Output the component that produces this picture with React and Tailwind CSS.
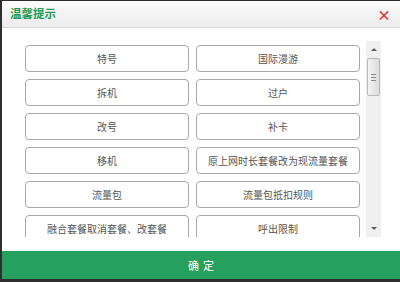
import React from "react";

const items = [
  "特号",
  "国际漫游",
  "拆机",
  "过户",
  "改号",
  "补卡",
  "移机",
  "原上网时长套餐改为现流量套餐",
  "流量包",
  "流量包抵扣规则",
  "融合套餐取消套餐、改套餐",
  "呼出限制",
];

function ScrollBar() {
  return (
    <div className="w-[15px] h-full bg-[#f0f0f0] flex flex-col items-center">
      <div className="h-[17px] w-full flex items-center justify-center">
        <div className="w-0 h-0 border-l-[3px] border-r-[3px] border-b-[3px] border-l-transparent border-r-transparent border-b-[#606060]" />
      </div>
      <div className="w-[13px] h-[38px] border border-[#b8b8b8] rounded-[2px] bg-gradient-to-r from-[#f4f4f4] to-[#dcdcdc] flex flex-col items-center justify-center gap-[2px]">
        <div className="w-[5px] h-px bg-[#8a8a8a]" />
        <div className="w-[5px] h-px bg-[#8a8a8a]" />
        <div className="w-[5px] h-px bg-[#8a8a8a]" />
      </div>
      <div className="flex-1" />
      <div className="h-[17px] w-full flex items-center justify-center">
        <div className="w-0 h-0 border-l-[3px] border-r-[3px] border-t-[3px] border-l-transparent border-r-transparent border-t-[#606060]" />
      </div>
    </div>
  );
}

export default function App() {
  return (
    <div
      className="w-[400px] h-[282px] bg-[#2e2e2e] pl-[2px] pt-px overflow-hidden"
      style={{ fontFamily: '"Noto Sans CJK SC", "Noto Sans", sans-serif' }}
    >
      <div className="h-[278px] bg-white flex flex-col">
        <div className="h-[27px] shrink-0 bg-gradient-to-b from-[#fbfbfb] to-[#ececec] border-b border-[#d6d6d6] flex items-center justify-between pl-[8px] pr-[9px]">
          <span className="text-[11.5px] font-bold text-[#1e9c55] leading-none">温馨提示</span>
          <span className="text-[14px] font-bold text-[#e0302f] leading-none">×</span>
        </div>
        <div className="flex-1 min-h-0 flex pt-[13px] pb-[14px] pl-[23px] pr-[19px]">
          <div className="flex-1 min-h-0 overflow-hidden pt-[4px]">
            <div className="grid grid-cols-[164px_164px] gap-x-[7px] gap-y-[7px]">
              {items.map((t) => (
                <div
                  key={t}
                  className="h-[27px] border border-[#a8a8a8] rounded-[4px] flex items-center justify-center text-[10px] text-[#555] whitespace-nowrap"
                >
                  {t}
                </div>
              ))}
            </div>
          </div>
          <ScrollBar />
        </div>
        <div className="h-[28px] shrink-0 bg-[#25a05d] flex items-center justify-center gap-[4px] text-[11px] text-white">
          <span>确</span>
          <span>定</span>
        </div>
      </div>
    </div>
  );
}
